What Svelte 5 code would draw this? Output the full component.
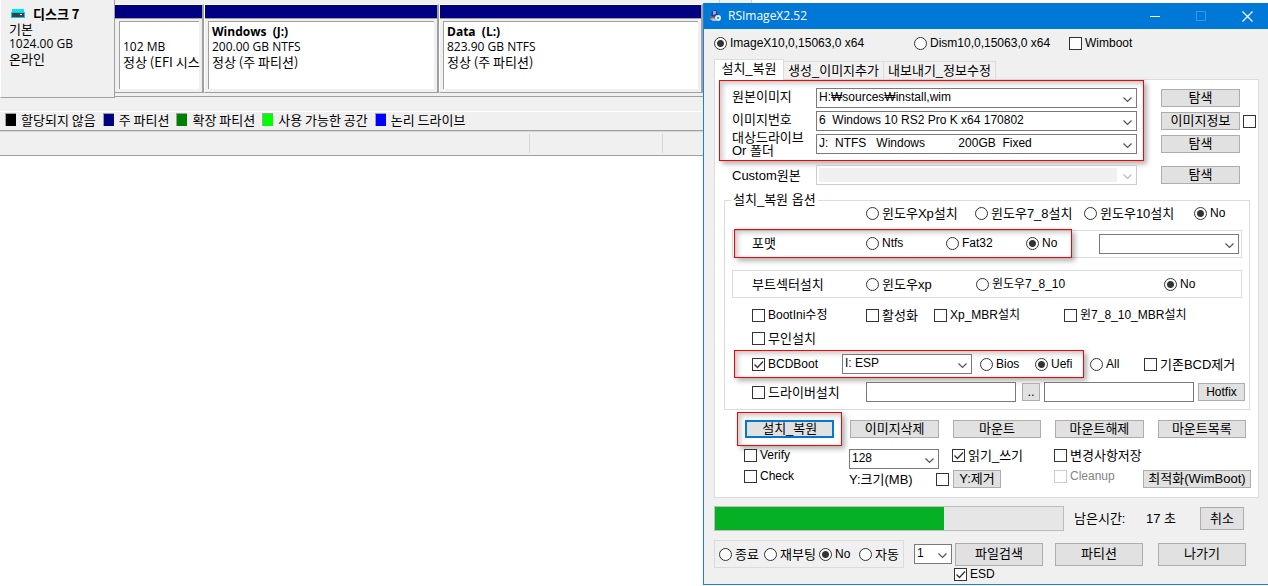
<script lang="ts">
	const partitions = [
		{ name: '', size: '102 MB', status: '정상 (EFI 시스' },
		{ name: 'Windows  (J:)', size: '200.00 GB NTFS', status: '정상 (주 파티션)' },
		{ name: 'Data  (L:)', size: '823.90 GB NTFS', status: '정상 (주 파티션)' }
	];

	const legend = [
		{ color: '#000000', text: '할당되지 않음' },
		{ color: '#000080', text: '주 파티션' },
		{ color: '#008000', text: '확장 파티션' },
		{ color: '#00ff00', text: '사용 가능한 공간' },
		{ color: '#0000ff', text: '논리 드라이브' }
	];

	const nb = '\u00a0';
	const target = `J:${nb}${nb}NTFS${nb.repeat(3)}Windows${nb.repeat(10)}200GB${nb}${nb}Fixed`;

	let progress = $state(65.8);

	// captions that are mostly latin are set a size smaller than the hangul ones
	function isLatin(text: string) {
		const hangul = text.match(/[가-힣]/g) ?? [];
		return hangul.length < text.length / 2;
	}
</script>

{#snippet radio(group: string, text: string, checked: boolean)}
	<label class="opt" class:latin={isLatin(text)}><input type="radio" name={group} {checked} />{text}</label>
{/snippet}

{#snippet check(text: string, checked: boolean, disabled: boolean = false)}
	<label class="opt" class:latin={isLatin(text)} class:disabled><input type="checkbox" {checked} {disabled} />{text}</label>
{/snippet}

<div class="desktop">
	<main class="disks">
		<div class="disk-row">
			<div class="disk-info">
				<div class="disk-name">
					<svg width="14" height="9" viewBox="0 0 14 9">
						<rect x="1" width="12" height="3" fill="#00e5ff" />
						<rect y="3" width="14" height="6" fill="#12c8dc" />
						<rect x="1" y="4" width="12" height="4" fill="#3f3f3f" />
						<rect x="9" y="5" width="2" height="1" fill="#fff" />
					</svg>
					<b>디스크 7</b>
				</div>
				<div>기본</div>
				<div class="size">1024.00 GB</div>
				<div>온라인</div>
			</div>
			<div class="parts">
				{#each partitions as p}
					<div class="part">
						<div class="bar"></div>
						<div class="part-body">
							<b class="size">{p.name}</b>
							<div class="size">{p.size}</div>
							<div>{p.status}</div>
						</div>
					</div>
				{/each}
			</div>
		</div>
		<div class="legend">
			{#each legend as item}
				<span class="key"><i style="background: {item.color}"></i>{item.text}</span>
			{/each}
		</div>
		<div class="status"><span></span><span></span><span></span></div>
	</main>

	<div class="side">
		<div class="behind"><span></span><span></span></div>
		<section class="window">
			<header>
				<svg class="logo" width="14" height="12" viewBox="0 0 14 12">
					<path d="M4 1l4-1 2 4-1 4-6-1z" fill="#2c3c92" />
					<path d="M5 1l3 0v3l-3 1z" fill="#8fa4e0" />
					<path d="M0 9l3-3 5 1v2l-4 1z" fill="#6f6a70" />
					<path d="M2 9l4-1 2 3-3 0z" fill="#b9c3d6" />
					<circle cx="10" cy="8" r="3" fill="#e3ecf6" />
					<circle cx="10" cy="8" r="1" fill="#0078d7" />
				</svg>
				<h1>RSImageX2.52</h1>
				<button class="cap" aria-label="최소화">
					<svg width="11" height="11" viewBox="0 0 11 11"><path d="M0 5.500h10" stroke="#fff" /></svg>
				</button>
				<button class="cap" aria-label="최대화" disabled>
					<svg width="11" height="11" viewBox="0 0 11 11"><path d="M.5.5h9v9h-9z" fill="none" stroke="#3d97e0" /></svg>
				</button>
				<button class="cap" aria-label="닫기">
					<svg width="11" height="11" viewBox="0 0 11 11"><path d="M.5.5l10 10M10.500.5l-10 10" stroke="#fff" stroke-width="1.200" /></svg>
				</button>
			</header>

			<div class="content">
				<div class="row engine">
					{@render radio('engine', 'ImageX10,0,15063,0 x64', true)}
					{@render radio('engine', 'Dism10,0,15063,0 x64', false)}
					{@render check('Wimboot', false)}
				</div>

				<div class="tabs" role="tablist">
					<button role="tab" aria-selected="true" class="tab active">설치_복원</button>
					<button role="tab" aria-selected="false" class="tab">생성_이미지추가</button>
					<button role="tab" aria-selected="false" class="tab">내보내기_정보수정</button>
				</div>

				<div class="panel">
					<div class="row source">
						<div class="mark source-fields">
							<label for="image">원본이미지</label>
							<select id="image"><option>H:₩sources₩install,wim</option></select>
							<label for="index">이미지번호</label>
							<select id="index"><option>6{nb}{nb}Windows 10 RS2 Pro K x64 170802</option></select>
							<label for="target" class="two">대상드라이브<br />Or 폴더</label>
							<select id="target"><option>{target}</option></select>
						</div>
						<div class="source-buttons">
							<button>탐색</button>
							<span></span>
							<button>이미지정보</button>
							<input type="checkbox" aria-label="이미지정보" />
							<button>탐색</button>
						</div>
					</div>
					<div class="row custom">
						<label for="custom">Custom원본</label>
						<select id="custom" disabled><option></option></select>
						<button>탐색</button>
					</div>

					<fieldset>
						<legend>설치_복원 옵션</legend>
						<div class="row os">
							{@render radio('os', '윈도우Xp설치', false)}
							{@render radio('os', '윈도우7_8설치', false)}
							{@render radio('os', '윈도우10설치', false)}
							{@render radio('os', 'No', true)}
						</div>
						<div class="group row format">
							<div class="mark row format-options">
								<span>포맷</span>
								{@render radio('format', 'Ntfs', false)}
								{@render radio('format', 'Fat32', false)}
								{@render radio('format', 'No', true)}
							</div>
							<select aria-label="포맷 드라이브"><option></option></select>
						</div>
						<div class="group row boot">
							<span>부트섹터설치</span>
							{@render radio('boot', '윈도우xp', false)}
							{@render radio('boot', '윈도우7_8_10', false)}
							{@render radio('boot', 'No', true)}
						</div>
						<div class="row extras">
							{@render check('BootIni수정', false)}
							{@render check('활성화', false)}
							{@render check('Xp_MBR설치', false)}
							{@render check('윈7_8_10_MBR설치', false)}
						</div>
						<div class="row unattended">
							{@render check('무인설치', false)}
						</div>
						<div class="row bcd">
							<div class="mark row bcd-options">
								{@render check('BCDBoot', true)}
								<select aria-label="BCDBoot 드라이브"><option>I: ESP</option></select>
								{@render radio('firmware', 'Bios', false)}
								{@render radio('firmware', 'Uefi', true)}
							</div>
							{@render radio('firmware', 'All', false)}
							{@render check('기존BCD제거', false)}
						</div>
						<div class="row driver">
							{@render check('드라이버설치', false)}
							<input type="text" aria-label="드라이버 경로" />
							<button class="browse">..</button>
							<input type="text" aria-label="Hotfix 경로" />
							<button class="latin">Hotfix</button>
						</div>
					</fieldset>

					<div class="row actions">
						<div class="mark"><button class="primary">설치_복원</button></div>
						<button>이미지삭제</button>
						<button>마운트</button>
						<button>마운트해제</button>
						<button>마운트목록</button>
					</div>
					<div class="row verify">
						{@render check('Verify', false)}
						<select aria-label="Y:크기(MB)"><option>128</option></select>
						{@render check('읽기_쓰기', true)}
						{@render check('변경사항저장', false)}
					</div>
					<div class="row cleanup">
						{@render check('Check', false)}
						<span>Y:크기(MB)</span>
						<input type="checkbox" aria-label="Y:제거" />
						<button>Y:제거</button>
						{@render check('Cleanup', false, true)}
						<button>최적화(WimBoot)</button>
					</div>
				</div>

				<div class="row running">
					<progress max="100" value={progress} aria-label="진행률"></progress>
					<span>남은시간:</span>
					<span>17 초</span>
					<button class="tall">취소</button>
				</div>
				<div class="row bottom">
					<div class="group row after">
						{@render radio('after', '종료', false)}
						{@render radio('after', '재부팅', false)}
						{@render radio('after', 'No', true)}
						{@render radio('after', '자동', false)}
					</div>
					<select aria-label="개수"><option>1</option></select>
					<button class="tall">파일검색</button>
					<button class="tall">파티션</button>
					<button class="tall">나가기</button>
				</div>
				<div class="esd">{@render check('ESD', true)}</div>
			</div>
		</section>
	</div>
</div>

<style>
	:global(body) {
		background: #fff;
	}
	.desktop {
		display: grid;
		grid-template-columns: minmax(0, 703fr) minmax(0, 565fr);
		font: 13px/15px 'Noto Sans CJK KR', sans-serif;
		color: #000;
	}
	.desktop * {
		box-sizing: border-box;
	}

	/* disk management */
	.disk-row {
		display: flex;
		height: 98px;
		background: #f0f0f0;
	}
	.disk-info {
		flex: none;
		width: 115px;
		padding: 6px 0 0 8px;
		border-left: 1px solid #fff;
		border-right: 1px solid #a0a0a0;
		border-bottom: 1px solid #a0a0a0;
	}
	.disk-name {
		display: flex;
		align-items: center;
		gap: 8px;
		padding-left: 2px;
	}
	.size {
		font-family: 'Open Sans', 'Noto Sans CJK KR', sans-serif;
		font-size: 12px;
	}
	.parts {
		flex: 1;
		min-width: 0;
		display: grid;
		grid-template-columns: 89fr 235fr 264fr;
		height: 97px;
		padding: 4px 0 3px;
		border-bottom: 1px solid #a0a0a0;
	}
	.part {
		min-width: 0;
		display: flex;
		flex-direction: column;
		border-top: 1px solid #fff;
		border-right: 2px solid #a0a0a0;
		border-bottom: 1px solid #a0a0a0;
	}
	.part + .part {
		border-left: 1px solid #fff;
	}
	.bar {
		height: 14px;
		background: #000080;
		border-bottom: 1px solid #a0a0a0;
	}
	.part-body {
		flex: 1;
		margin: 2px 3px 3px;
		padding: 2px 0 0 3px;
		background: #fff;
		border-top: 1px solid #a0a0a0;
		border-left: 1px solid #a0a0a0;
	}
	.part:first-child .part-body {
		margin-left: 4px;
	}
	.part-body > * {
		display: block;
		min-height: 15px;
		white-space: pre;
	}
	.legend {
		display: flex;
		gap: 7px;
		height: 33px;
		padding: 13px 0 2px 5px;
		white-space: nowrap;
		background: linear-gradient(#fff, #fff) 0 13px / 100% 1px no-repeat #f0f0f0;
		border-bottom: 1px solid #a0a0a0;
	}
	.key {
		display: flex;
		align-items: center;
		gap: 5px;
	}
	.key i {
		width: 11px;
		height: 13px;
		border-top: 1px solid #a0a0a0;
		border-left: 1px solid #a0a0a0;
	}
	.status {
		display: grid;
		grid-template-columns: 530fr 133fr 40fr;
		height: 25px;
		padding: 2px 0;
		background: #f0f0f0;
		border-top: 1px solid #d7d7d7;
		border-bottom: 1px solid #a0a0a0;
	}
	.status span:not(:last-child) {
		border-right: 1px solid #d7d7d7;
	}
	.behind {
		display: flex;
		height: 3px;
	}
	.behind span {
		width: 17px;
		background: #f0f0f0;
		border-right: 1px solid #d0d0d0;
	}
	.behind span:last-child {
		width: 32px;
	}

	/* window */
	.window {
		font-family: 'Liberation Sans', 'Noto Sans CJK KR', sans-serif;
		background: #f0f0f0;
		border-left: 1px solid #1883d7;
		border-bottom: 1px solid #1883d7;
	}
	header {
		display: flex;
		align-items: center;
		height: 26px;
		padding-left: 4px;
		background: #0078d7;
		color: #fff;
	}
	h1 {
		flex: 1;
		margin: 0 0 0 6px;
		font: 12px/16px 'Open Sans', sans-serif;
	}
	.cap {
		width: 46px;
		height: 26px;
		padding: 0 0 0 4px;
		background: none;
		border: 0;
	}
	.cap svg {
		display: block;
		margin: 0 auto;
	}
	.content {
		padding: 0 9px 3px 10px;
	}
	.row {
		display: grid;
		align-items: center;
	}
	.row > * {
		min-width: 0;
		white-space: nowrap;
	}
	.opt {
		display: flex;
		align-items: center;
		gap: 3px;
		height: 13px;
		white-space: nowrap;
	}
	.disabled {
		color: #838383;
	}
	input {
		margin: 0;
		background: #fff;
		border: 1px solid #7a7a7a;
		font: inherit;
	}
	input[type='text'] {
		height: 20px;
	}
	input[type='radio'],
	input[type='checkbox'] {
		flex: none;
		appearance: none;
		width: 13px;
		height: 13px;
		border-color: #333;
	}
	input[type='radio'] {
		border-radius: 50%;
	}
	input[type='radio']:checked {
		background: radial-gradient(circle, #333 3px, #fff 4px);
	}
	input[type='checkbox']:checked {
		background-image: url("data:image/svg+xml,%3Csvg xmlns='http://www.w3.org/2000/svg' viewBox='0 0 11 11'%3E%3Cpath d='M1.500 5.500l3 3 5.500-6' fill='none' stroke='%23333' stroke-width='1.300'/%3E%3C/svg%3E");
	}
	input[type='checkbox']:disabled {
		border-color: #ccc;
	}
	button {
		height: 18px;
		padding: 0;
		font: inherit;
		line-height: 14px;
		color: #000;
		white-space: nowrap;
		background: #e1e1e1;
		border: 1px solid #adadad;
	}
	.latin {
		font-size: 12px;
	}
	.tall {
		height: 23px;
	}
	.primary {
		width: 100%;
		border: 2px solid #0078d7;
	}
	select {
		appearance: none;
		width: 100%;
		height: 20px;
		padding: 0 18px 2px 2px;
		font: inherit;
		font-size: 12px;
		color: #000;
		border: 1px solid #7a7a7a;
		border-radius: 0;
		background: url("data:image/svg+xml,%3Csvg xmlns='http://www.w3.org/2000/svg' width='9' height='6'%3E%3Cpath d='M.5.5l4 4 4-4' fill='none' stroke='%23555' stroke-width='1.200'/%3E%3C/svg%3E") right 4px top 8px no-repeat #fff;
	}
	select:disabled {
		opacity: 1;
		border-color: #ccc;
		background:
			url("data:image/svg+xml,%3Csvg xmlns='http://www.w3.org/2000/svg' width='9' height='6'%3E%3Cpath d='M.5.5l4 4 4-4' fill='none' stroke='%23bbb' stroke-width='1.200'/%3E%3C/svg%3E") right 4px top 8px no-repeat,
			linear-gradient(#fff, #fff) right / 19px 100% no-repeat,
			#f0f0f0;
		box-shadow: inset 0 0 0 2px #fff;
	}
	.mark {
		border: 1px solid #f00;
		box-shadow:
			3px 3px 5px rgba(0, 0, 0, 0.3),
			inset 3px 3px 5px rgba(0, 0, 0, 0.2);
	}
	.group {
		height: 28px;
		border: 1px solid #dcdcdc;
	}
	.engine {
		grid-template-columns: 200fr 155fr 190fr;
		height: 28px;
	}
	.tabs {
		display: grid;
		grid-template-columns: 70fr 100fr 112fr 263fr;
		align-items: end;
		height: 22px;
	}
	.tab {
		min-width: 0;
		background: #f0f0f0;
		border-color: #dcdcdc;
		border-width: 1px 1px 0 0;
	}
	.tab.active {
		height: 21px;
		margin-bottom: -1px;
		padding-bottom: 2px;
		background: #fff;
		border-left-width: 1px;
		z-index: 1;
	}
	.panel {
		padding-bottom: 9px;
		background: #fff;
		border: 1px solid #dcdcdc;
	}
	.source {
		grid-template-columns: 425fr 112fr;
		align-items: start;
		padding: 0 2px 0 4px;
	}
	.source-fields {
		display: grid;
		grid-template-columns: 84fr 321fr;
		grid-auto-rows: 20px;
		row-gap: 3px;
		align-items: center;
		padding: 7px 6px 6px 12px;
	}
	.source-fields label {
		padding-bottom: 3px;
	}
	.source-fields .two {
		padding: 0;
		line-height: 13px;
	}
	.source-buttons {
		display: grid;
		grid-template-columns: 1fr 13px;
		gap: 5px 3px;
		align-items: center;
		padding: 9px 0 0 17px;
	}
	.custom {
		grid-template-columns: 84fr 345fr 79fr;
		margin-top: 4px;
		padding: 0 18px 0 17px;
	}
	.custom select {
		width: auto;
		margin-right: 24px;
	}
	fieldset {
		min-width: 0;
		margin: 8px 8px 0 9px;
		padding: 0 0 7px;
		border: 1px solid #dcdcdc;
	}
	fieldset legend {
		display: block;
		height: 14px;
		margin-left: 6px;
		padding: 0 2px;
		line-height: 14px;
		background: none;
		border: 0;
	}
	.os {
		grid-template-columns: 109fr 109fr 110fr 55fr;
		padding-left: 141px;
	}
	.format {
		grid-template-columns: 338fr 167fr;
		margin: 10px 7px 0;
		padding: 0 2px 0 1px;
	}
	.format-options {
		grid-template-columns: 114fr 80fr 80fr 45fr;
		height: 29px;
		margin: -2px 0 -1px;
		padding-left: 17px;
	}
	.format select {
		width: auto;
		margin-left: 27px;
	}
	.boot {
		grid-template-columns: 114fr 110fr 188fr 77fr;
		margin: 12px 7px 0;
		padding-left: 19px;
	}
	.extras {
		grid-template-columns: 114fr 68fr 130fr 185fr;
		margin-top: 11px;
		padding-left: 27px;
	}
	.unattended {
		margin-top: 10px;
		padding-left: 27px;
	}
	.bcd {
		grid-template-columns: 356fr 54fr 105fr;
		margin-top: 5px;
		padding-left: 9px;
	}
	.bcd-options {
		grid-template-columns: 90fr 138fr 55fr 48fr;
		height: 28px;
		margin-right: 6px;
		padding-left: 17px;
	}
	.bcd-options select {
		width: auto;
		margin-right: 8px;
	}
	.driver {
		grid-template-columns: 110fr 150fr 20fr 150fr 47fr;
		column-gap: 4px;
		margin-top: 4px;
		padding: 0 4px 0 27px;
	}
	.browse {
		margin-left: 2px;
	}
	.actions {
		grid-template-columns: 99fr 88fr 88fr 88fr 88fr;
		column-gap: 14px;
		margin-top: 2px;
		padding: 0 12px 0 22px;
	}
	.actions .mark {
		margin-right: -6px;
		padding: 7px;
	}
	.verify {
		grid-template-columns: 105fr 103fr 102fr 204fr;
		align-items: start;
		height: 21px;
		margin-top: 3px;
		padding-left: 29px;
	}
	.verify select {
		width: auto;
		margin-right: 13px;
	}
	.cleanup {
		grid-template-columns: 105fr 87fr 17fr 48fr 142fr 108fr;
		padding: 0 7px 0 29px;
	}
	.cleanup .opt {
		align-self: start;
	}
	.cleanup .disabled {
		margin-left: 53px;
	}
	.running {
		grid-template-columns: 360fr 72fr 54fr 44fr;
		margin-top: 8px;
		padding-right: 15px;
	}
	progress {
		appearance: none;
		width: auto;
		height: 25px;
		margin-right: 10px;
		border: 1px solid #bcbcbc;
	}
	progress::-webkit-progress-bar {
		background: #e6e6e6;
	}
	progress::-webkit-progress-value {
		background: #06b025;
	}
	.bottom {
		grid-template-columns: 200fr 41fr 100fr 103fr 88fr;
		margin-top: 9px;
		padding-right: 13px;
	}
	.after {
		grid-template-columns: 45fr 55fr 40fr 44fr;
		margin-right: 10px;
		padding-left: 4px;
	}
	.bottom select {
		width: auto;
		margin-right: 3px;
	}
	.bottom button:nth-of-type(1) {
		margin-right: 12px;
	}
	.bottom button:nth-of-type(2) {
		margin-right: 15px;
	}
	.esd {
		padding-left: 240px;
	}
</style>
